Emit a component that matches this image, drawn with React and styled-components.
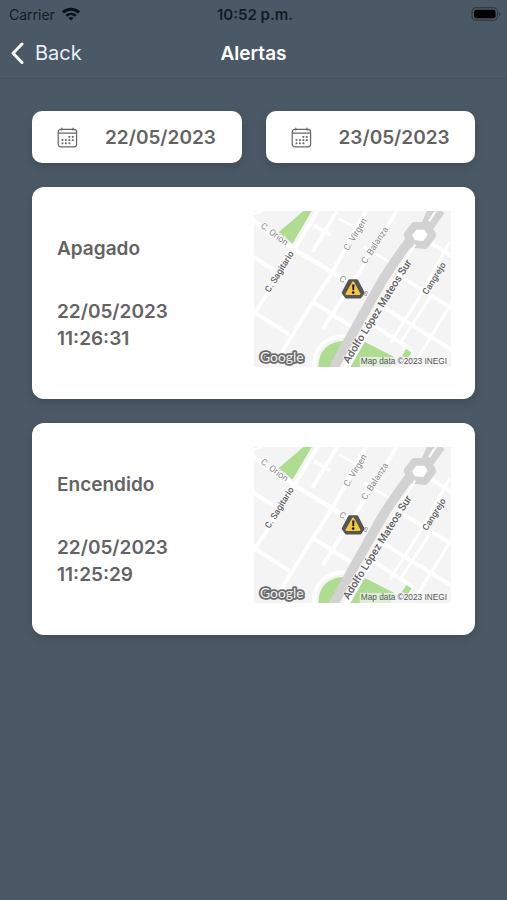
import React from 'react';
import styled, { createGlobalStyle } from 'styled-components';

const GlobalStyle = createGlobalStyle`
	* {
		box-sizing: border-box;
	}
	body {
		margin: 0;
		background-color: #4a5965;
		font-family: Inter, 'Liberation Sans', sans-serif;
	}
`;

const Screen = styled.div`
	width: 100%;
	min-height: 100vh;
	background-color: #4a5965;
`;
const StatusBar = styled.div`
	display: grid;
	grid-template-columns: 1fr auto 1fr;
	align-items: center;
	height: 28px;
	padding: 0 6px 0 9px;
	font-size: 14px;
	color: #101c26;
`;
const Carrier = styled.div`
	display: flex;
	align-items: center;
	gap: 7px;
`;
const Clock = styled.span`
	font-size: 15px;
	font-weight: 600;
`;
const Battery = styled.svg`
	justify-self: end;
`;
const NavBar = styled.header`
	display: grid;
	grid-template-columns: 1fr auto 1fr;
	align-items: center;
	height: 51px;
	padding: 0 10px;
	border-bottom: 1px solid #43515c;
`;
const BackButton = styled.button`
	display: flex;
	align-items: center;
	justify-self: start;
	gap: 11px;
	padding: 0;
	border: 0;
	background: none;
	font-family: inherit;
	font-size: 20px;
	color: #e9eef8;
	cursor: pointer;
`;
const Title = styled.h1`
	margin: 0;
	font-size: 19px;
	font-weight: 600;
	color: #fff;
`;
const Content = styled.main`
	display: flex;
	flex-direction: column;
	gap: 24px;
	padding: 32px;
`;
const DateRow = styled.div`
	display: grid;
	grid-template-columns: 1fr 1fr;
	gap: 24px;
`;
const DateButton = styled.button`
	display: flex;
	align-items: center;
	gap: 27px;
	height: 52px;
	padding: 0 25px;
	border: 0;
	border-radius: 10px;
	background-color: #fff;
	box-shadow: 0 4px 10px rgba(0, 0, 0, 0.14);
	font-family: inherit;
	font-size: 19px;
	font-weight: 600;
	color: #636363;
	cursor: pointer;
`;
const Card = styled.article`
	display: flex;
	align-items: stretch;
	justify-content: space-between;
	padding: 24px 24px 24px 25px;
	border-radius: 12px;
	background-color: #fff;
	box-shadow: 0 4px 10px rgba(0, 0, 0, 0.14);
`;
const CardInfo = styled.div`
	display: flex;
	flex-direction: column;
	justify-content: center;
	gap: 36px;
	font-size: 19px;
	font-weight: 600;
	line-height: 27px;
	color: #636363;
`;
const AlertName = styled.h2`
	margin: 0;
	font-size: inherit;
	font-weight: inherit;
`;
const AlertTime = styled.time`
	display: flex;
	flex-direction: column;
`;
const MapPicture = styled.svg`
	display: block;
	width: 50%;
	height: auto;
	margin-bottom: 8px;
`;
const StreetName = styled.text`
	font-family: Roboto, 'Liberation Sans', sans-serif;
	font-size: ${(props) => props.$size || 27}px;
	font-weight: ${(props) => (props.$main ? 500 : 400)};
	fill: ${(props) => (props.$main ? '#606060' : '#8a8a8a')};
	stroke: #fff;
	stroke-width: 4px;
	paint-order: stroke;
`;
const GoogleMark = styled.text`
	font-family: Lato, 'Liberation Sans', sans-serif;
	font-size: 42px;
	font-weight: 400;
	fill: #f2f2f2;
	stroke: #6c6c6c;
	stroke-width: 11px;
	stroke-linejoin: round;
	paint-order: stroke;
`;
const MapCredit = styled.text`
	font-family: 'Liberation Sans', sans-serif;
	font-size: 25px;
	fill: #555;
`;

const WifiIcon = () => (
	<svg width="18" height="14" viewBox="0 0 18 14" fill="none" stroke="#07121b" strokeWidth="3">
		<path d="M1 5.4C5.4 1.1 12.6 1.1 17 5.4" />
		<path d="M4.3 8.8C7 6.3 11 6.3 13.7 8.8" strokeWidth="2.6" />
		<path d="M9 13.6 6.4 10.9Q9 8.9 11.6 10.9Z" fill="#07121b" stroke="none" />
	</svg>
);

const BatteryIcon = () => (
	<Battery width="30" height="14" viewBox="0 0 30 14">
		<rect x="1" y=".7" width="25.5" height="12.6" rx="4" fill="none" stroke="#303b43" strokeWidth="1.2" />
		<rect x="3" y="2.7" width="21.5" height="8.6" rx="2" fill="#000" />
		<path d="M28 5v4q1.6-.6 1.6-2T28 5" fill="#303b43" />
	</Battery>
);

const BackIcon = () => (
	<svg width="14" height="24" viewBox="0 0 14 24" fill="none" stroke="#fff" strokeWidth="3" strokeLinecap="round">
		<path d="M12 3 3 12.2l9 9.3" strokeLinejoin="round" />
	</svg>
);

const CalendarIcon = () => (
	<svg width="21" height="21" viewBox="0 0 21 21" fill="none" stroke="#666" strokeWidth="1.2">
		<rect x="1.2" y="2.4" width="18.4" height="17.4" rx="2.6" />
		<path d="M1.2 6.2h18.4M4.8.8v2.6M16 .8v2.6" />
		<g fill="#666" stroke="none">
			{[[11.5, 9], [14.8, 9], [4.6, 12.2], [8, 12.2], [11.5, 12.2], [14.8, 12.2], [4.6, 15.4], [8, 15.4], [11.5, 15.4]].map(([x, y]) => (
				<rect key={`${x}-${y}`} x={x} y={y} width="1.8" height="1.8" />
			))}
		</g>
	</svg>
);

const AlertMap = () => (
	<MapPicture viewBox="9 12 594 471" role="img" aria-label="Mapa">
		<rect x="9" y="12" width="594" height="471" fill="#f4f4f4" />
		{/* parks */}
		<g fill="#aedc91">
			<path d="M158 12h25L125 110 83 76Z" />
			<path d="M203 483q2-76 78-79L240 483Z" />
			<path d="M330 400 432 452 420 483H290Z" />
			<path d="M474 419 490 427 472 458 455 449Z" />
		</g>
		{/* side streets */}
		<g fill="none" stroke="#fff" strokeWidth="12">
			<path d="M0 35 40 67 135 130 250 200 350 263" strokeWidth="14" />
			<path d="M0 145 68 190M5 314 115 385M182 284 300 358" />
			<path d="M205 5 132 126 60 245 0 335M350 5 248 192 184 290 85 450" />
			<path d="M260 12 185 135M440 10 330 190 216 368M190 55 240 84" />
			<path d="M10 20 35 12M265 35 310 60M340 120 425 170" strokeWidth="7" />
			<path d="M545 110 620 158M460 215 620 315M395 300 620 440M360 350 490 435" />
			<path d="M600 105 505 275 420 410M620 265 500 460M545 265 450 410" strokeWidth="9" />
			<path d="M190 483q0-90 95-94" />
			<path d="M470 165 285 490" strokeWidth="18" />
		</g>
		{/* avenue and roundabout */}
		<g fill="none" stroke="#d2d2d2">
			<path d="M246 490 298 396 398 218 Q445 145 480 100" strokeWidth="29" />
			<path d="M520 60 545 5M530 75 575 12" strokeWidth="21" />
			<path d="M492 57 529 57 547 84 524 115 486 111 472 84Z" strokeWidth="23" strokeLinejoin="round" fill="#fff" />
		</g>
		<path d="M495 113 462 165M537 43 552 18" stroke="#fff" strokeWidth="6" />
		<StreetName transform="translate(27 60) rotate(37)">C. Orión</StreetName>
		<StreetName $main transform="translate(56 259) rotate(-58)">C. Sagitario</StreetName>
		<StreetName transform="translate(293 133) rotate(-58)">C. Virgen</StreetName>
		<StreetName transform="translate(346 173) rotate(-57)">C. Balanza</StreetName>
		<StreetName transform="translate(264 220) rotate(36)">C.</StreetName>
		<StreetName transform="translate(336 262) rotate(36)">s</StreetName>
		<StreetName $main transform="translate(531 266) rotate(-58)">Cangrejo</StreetName>
		<StreetName $main $size={32} transform="translate(294 473) rotate(-58)">Adolfo López Mateos Sur</StreetName>
		{/* warning pin */}
		<path d="M297 222h22l19 36-9 13h-42l-9-13Z" fill="#555" stroke="#555" strokeWidth="9" strokeLinejoin="round" />
		<path d="M308 227 327 262H288Z" fill="#f6c73c" stroke="#f6c73c" strokeWidth="6" strokeLinejoin="round" />
		<path d="M305 234h7l-1 17h-5Z" fill="#1c1a12" />
		<circle cx="308" cy="258" r="4" fill="#1c1a12" />
		<GoogleMark x="27" y="468">Google</GoogleMark>
		<rect x="328" y="452" width="275" height="31" fill="#f5f5f5" fillOpacity="0.7" />
		<MapCredit x="331" y="474">Map data ©2023 INEGI</MapCredit>
	</MapPicture>
);

const alerts = [
	{ name: 'Apagado', date: '22/05/2023', hour: '11:26:31' },
	{ name: 'Encendido', date: '22/05/2023', hour: '11:25:29' },
];

const AlertCard = (props) => {
	const { info } = props;
	return (
		<Card>
			<CardInfo>
				<AlertName>{info.name}</AlertName>
				<AlertTime>
					<span>{info.date}</span>
					<span>{info.hour}</span>
				</AlertTime>
			</CardInfo>
			<AlertMap />
		</Card>
	);
};

const App = () => {
	return (
		<Screen>
			<GlobalStyle />
			<StatusBar>
				<Carrier>
					<span>Carrier</span>
					<WifiIcon />
				</Carrier>
				<Clock>10:52 p.m.</Clock>
				<BatteryIcon />
			</StatusBar>
			<NavBar>
				<BackButton>
					<BackIcon />
					Back
				</BackButton>
				<Title>Alertas</Title>
			</NavBar>
			<Content>
				<DateRow>
					<DateButton>
						<CalendarIcon />
						22/05/2023
					</DateButton>
					<DateButton>
						<CalendarIcon />
						23/05/2023
					</DateButton>
				</DateRow>
				{alerts.map((info) => (
					<AlertCard key={info.hour} info={info} />
				))}
			</Content>
		</Screen>
	);
};

export default App;
